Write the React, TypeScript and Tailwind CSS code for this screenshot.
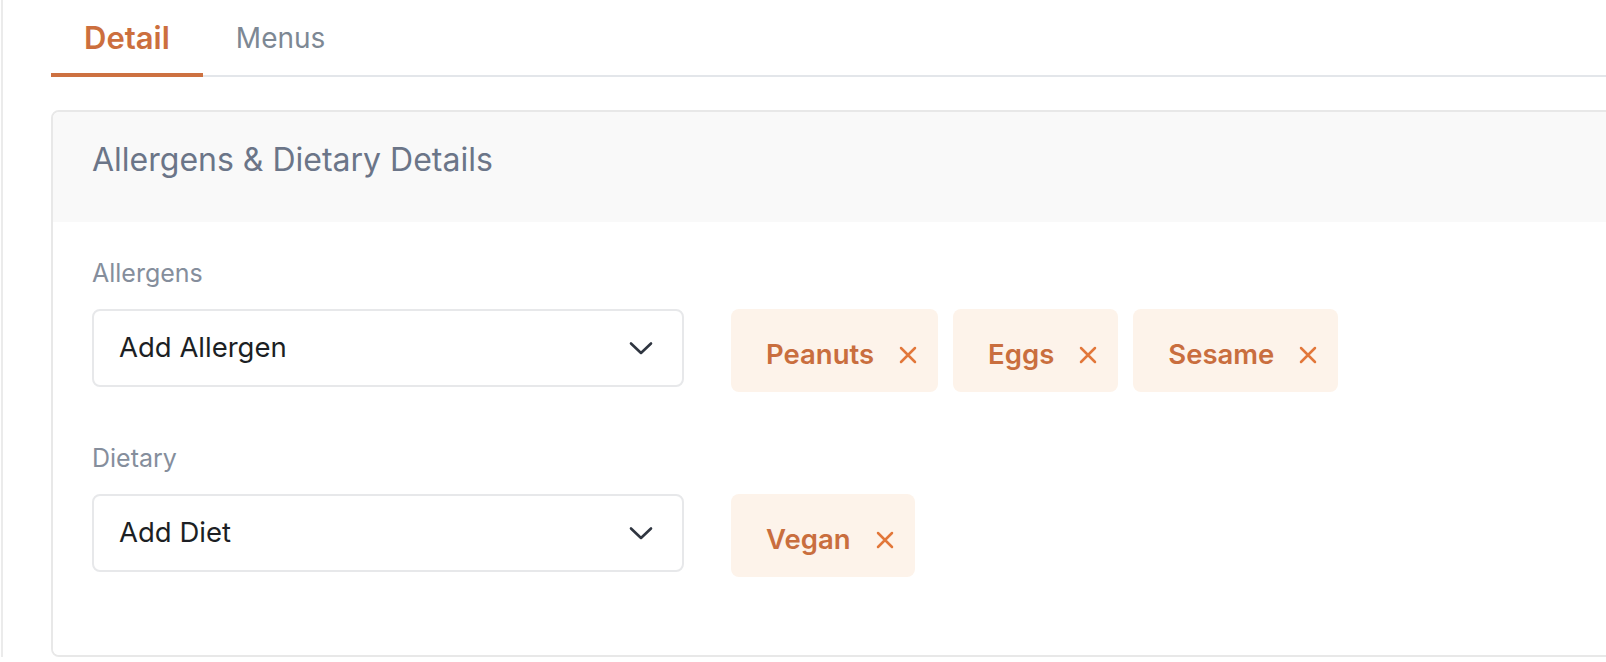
import React from "react";

type Tag = { id: string; label: string };

const allergens: Tag[] = [
  { id: "peanuts", label: "Peanuts" },
  { id: "eggs", label: "Eggs" },
  { id: "sesame", label: "Sesame" },
];

const diets: Tag[] = [{ id: "vegan", label: "Vegan" }];

function Chevron() {
  return (
    <svg width="24" height="15" viewBox="0 0 24 15" fill="none" className="shrink-0">
      <path
        d="M2 2.5 12 12 22 2.5"
        stroke="#2f3540"
        strokeWidth="2.6"
        strokeLinecap="round"
        strokeLinejoin="round"
      />
    </svg>
  );
}

function CloseIcon() {
  return (
    <svg width="18" height="18" viewBox="0 0 18 18" fill="none" className="shrink-0">
      <path d="M2 2 16 16M16 2 2 16" stroke="#e2773a" strokeWidth="2.5" strokeLinecap="round" />
    </svg>
  );
}

function Chip({ label }: { label: string }) {
  return (
    <div className="flex h-[83px] items-center rounded-[8px] bg-[#fdf3ea] pl-[35px] pr-[21px] pt-2">
      <span className="text-[27.5px] font-semibold text-[#c96e3e]">{label}</span>
      <button type="button" className="ml-[25px] flex items-center">
        <CloseIcon />
      </button>
    </div>
  );
}

function SelectRow({ label, placeholder, tags }: { label: string; placeholder: string; tags: Tag[] }) {
  return (
    <div>
      <p className="mb-[21px] text-[25px] leading-[30px] text-[#858e9c]">{label}</p>
      <div className="flex items-start gap-[47px]">
        <div className="flex h-[78px] w-[592px] items-center justify-between rounded-[8px] border-2 border-[#e7e8ea] pl-[25px] pr-[29px]">
          <span className="text-[27.5px] text-[#1c1f24]">{placeholder}</span>
          <Chevron />
        </div>
        <div className="flex gap-[15px]">
          {tags.map((t) => (
            <Chip key={t.id} label={t.label} />
          ))}
        </div>
      </div>
    </div>
  );
}

export default function App() {
  const [tab, setTab] = React.useState("detail");

  return (
    <div
      className="h-[662px] w-full overflow-hidden bg-white"
      style={{ fontFamily: "Inter, 'Noto Sans', sans-serif" }}
    >
      <div className="ml-px mt-[5px] h-[657px] border-l-2 border-[#ebebeb] pl-[48px]">
        {/* Tabs */}
        <div className="-mt-[5px] flex border-b-2 border-[#e3e6ea]">
          {[
            { id: "detail", label: "Detail" },
            { id: "menus", label: "Menus" },
          ].map((t) => (
            <button
              key={t.id}
              type="button"
              onClick={() => setTab(t.id)}
              className={
                tab === t.id
                  ? "-mb-[2px] flex h-[77px] items-center border-b-4 border-[#cd7141] px-[33px] pt-[3px] text-[31px] font-semibold text-[#cc6f3e]"
                  : "-mb-[2px] flex h-[77px] items-center border-b-4 border-transparent px-[33px] pt-[3px] text-[28px] text-[#7d8894]"
              }
            >
              {t.label}
            </button>
          ))}
        </div>

        {/* Card */}
        <div className="mt-[33px] w-[1620px] overflow-hidden rounded-[8px] border-2 border-[#e8e8e8]">
          <div className="h-[110px] bg-[#f9f9f9] px-[39px] pt-[32px]">
            <h2 className="text-[32px] leading-none text-[#6b7588]">Allergens &amp; Dietary Details</h2>
          </div>
          <div className="space-y-[51px] bg-white px-[39px] pb-[78px] pt-[36px]">
            <SelectRow label="Allergens" placeholder="Add Allergen" tags={allergens} />
            <SelectRow label="Dietary" placeholder="Add Diet" tags={diets} />
          </div>
        </div>
      </div>
    </div>
  );
}
